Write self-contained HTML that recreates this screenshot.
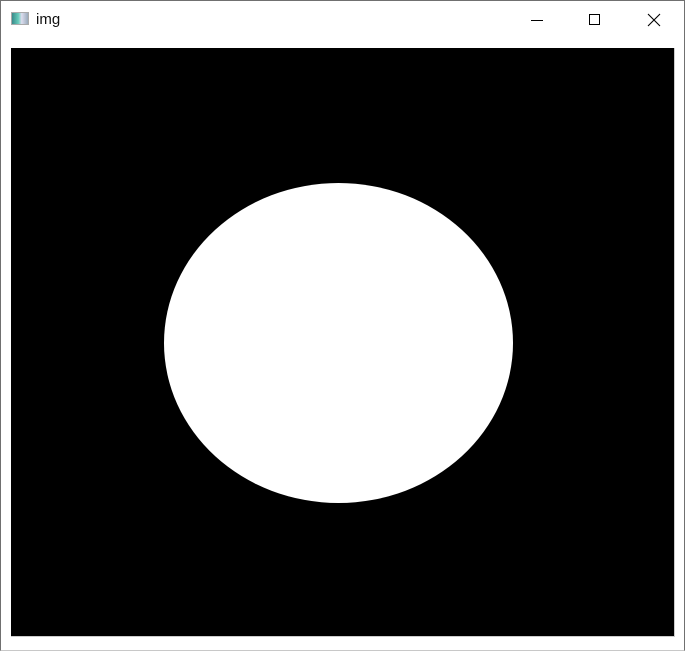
<!DOCTYPE html>
<html><head><meta charset="utf-8"><style>
html,body{margin:0;padding:0;width:685px;height:651px;overflow:hidden;background:#fff;}
.win{position:absolute;left:0;top:0;width:683px;height:649px;border:1px solid #707070;border-bottom-color:#c8c8c8;background:#fff;}
.title{position:absolute;left:36px;top:11px;font:15px "Liberation Sans",sans-serif;color:#111;}
.icon{position:absolute;left:11px;top:12px;width:18px;height:13px;background:linear-gradient(90deg,#3a8a8a,#6cb 40%,#dde 60%,#9ab);border:1px solid #aaa;box-sizing:border-box;}
.canvas{position:absolute;left:11px;top:48px;width:663px;height:588px;background:#000;border-right:1px solid #ccc;border-bottom:1px solid #ccc;}
</style></head><body>
<div class="win"></div>
<div class="icon"></div>
<div class="title">img</div>
<svg style="position:absolute;left:0;top:0" width="685" height="48">
<line x1="531" y1="20.5" x2="543" y2="20.5" stroke="#000" stroke-width="1"/>
<rect x="589.5" y="14.5" width="10" height="10" fill="none" stroke="#000" stroke-width="1"/>
<path d="M648 14 L660 26 M660 14 L648 26" stroke="#000" stroke-width="1.1"/>
</svg>
<div class="canvas"></div>
<svg style="position:absolute;left:0;top:0" width="685" height="651">
<ellipse cx="338.5" cy="343" rx="174.5" ry="160" fill="#fff"/>
</svg>
</body></html>
